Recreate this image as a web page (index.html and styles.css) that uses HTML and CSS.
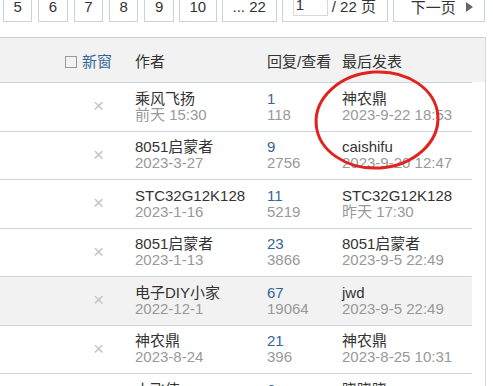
FILE: index.html
```html
<!DOCTYPE html>
<html>
	<head>
		<meta charset="utf-8">
		<title>帖子列表</title>
		<link rel="stylesheet" href="styles.css">
	</head>
	<body>
		<div class="pg">
			<a>5</a>
			<a>6</a>
			<a>7</a>
			<a>8</a>
			<a>9</a>
			<a class="ten">10</a>
			<a class="last">... 22</a>
			<label class="jump"><input type="text" value="1" size="2"> / 22 页</label>
			<a class="nxt">下一页<span class="arrow"></span></a>
		</div>

		<div class="list">
			<div class="head">
				<table cellpadding="0" cellspacing="0" border="0">
					<colgroup><col class="w1"><col class="w2"><col class="w3"><col class="w4"></colgroup>
					<tr>
						<td class="c1"><span class="chk"></span><span class="newwin">新窗</span></td>
						<td>作者</td>
						<td>回复/查看</td>
						<td>最后发表</td>
					</tr>
				</table>
			</div>

			<table class="rows" cellpadding="0" cellspacing="0" border="0">
				<colgroup><col class="w1"><col class="w2"><col class="w3"><col class="w4"></colgroup>
				<tr>
					<td class="c1"><span class="x">×</span></td>
					<td><div>乘风飞扬</div><div class="sub">前天 15:30</div></td>
					<td><div class="num">1</div><div class="sub">118</div></td>
					<td><div>神农鼎</div><div class="sub">2023-9-22 18:53</div></td>
				</tr>
				<tr>
					<td class="c1"><span class="x">×</span></td>
					<td><div>8051启蒙者</div><div class="sub">2023-3-27</div></td>
					<td><div class="num">9</div><div class="sub">2756</div></td>
					<td><div>caishifu</div><div class="sub">2023-9-20 12:47</div></td>
				</tr>
				<tr>
					<td class="c1"><span class="x">×</span></td>
					<td><div>STC32G12K128</div><div class="sub">2023-1-16</div></td>
					<td><div class="num">11</div><div class="sub">5219</div></td>
					<td><div>STC32G12K128</div><div class="sub">昨天 17:30</div></td>
				</tr>
				<tr>
					<td class="c1"><span class="x">×</span></td>
					<td><div>8051启蒙者</div><div class="sub">2023-1-13</div></td>
					<td><div class="num">23</div><div class="sub">3866</div></td>
					<td><div>8051启蒙者</div><div class="sub">2023-9-5 22:49</div></td>
				</tr>
				<tr class="hover">
					<td class="c1"><span class="x">×</span></td>
					<td><div>电子DIY小家</div><div class="sub">2022-12-1</div></td>
					<td><div class="num">67</div><div class="sub">19064</div></td>
					<td><div>jwd</div><div class="sub">2023-9-5 22:49</div></td>
				</tr>
				<tr>
					<td class="c1"><span class="x">×</span></td>
					<td><div>神农鼎</div><div class="sub">2023-8-24</div></td>
					<td><div class="num">21</div><div class="sub">396</div></td>
					<td><div>神农鼎</div><div class="sub">2023-8-25 10:31</div></td>
				</tr>
				<tr>
					<td class="c1"><span class="x">×</span></td>
					<td><div>小飞侠</div><div class="sub">2023-8-20</div></td>
					<td><div class="num">6</div><div class="sub">210</div></td>
					<td><div>晓晓晓</div><div class="sub">2023-8-22 09:12</div></td>
				</tr>
			</table>

			<svg class="mark" width="134" height="108" viewBox="0 0 134 108">
				<ellipse cx="66" cy="52" rx="61" ry="48" fill="none" stroke="#e0231d" stroke-width="3" transform="rotate(-4 66 52)"/>
			</svg>
		</div>
	</body>
</html>
```

FILE: styles.css
```css
body {
	margin: 0;
	background: #FFFFFF;
	color: #333333;
	font-family: "Liberation Sans", "Noto Sans CJK SC", sans-serif;
	font-size: 15px;
	overflow: hidden;
}
.pg {
	display: flex;
	gap: 6px;
	margin: -9px 0 0 3px;
	height: 31px;
}
.pg a, .pg .jump {
	display: flex;
	align-items: center;
	justify-content: center;
	height: 29px;
	padding: 0 9.5px;
	border: 1px solid #C9D2DA;
	background: #FFFFFF;
	color: #333333;
	white-space: nowrap;
}
.pg .ten {
	margin-left: -1px;
	width: 17px;
}
.pg .last {
	margin-left: -1px;
	width: 34px;
}
.pg .jump {
	align-items: flex-start;
	justify-content: flex-start;
	margin-left: -1px;
	padding: 0 5px 0 10px;
	width: 89px;
	line-height: 29px;
}
.pg .jump input {
	width: 29px;
	height: 20px;
	margin: 0 4px 0 0;
	padding: 1px 2px;
	border: 1px solid #D8D8D8;
	font: 15px "Liberation Sans", sans-serif;
	color: #333333;
}
.pg .nxt {
	margin-left: -1px;
	padding: 0 15px 0 17px;
	width: 58px;
	justify-content: flex-start;
}
.pg .arrow {
	display: block;
	width: 0;
	height: 0;
	margin-left: 10px;
	border-left: 7px solid #666666;
	border-top: 5px solid transparent;
	border-bottom: 5px solid transparent;
}
.list {
	position: relative;
	width: 485px;
	margin-top: 15px;
	border-right: 1px solid #D6D6D6;
	min-height: 400px;
}
.list table {
	width: 472px;
	table-layout: fixed;
	border-collapse: collapse;
}
.w1 {
	width: 131px;
}
.w2 {
	width: 132px;
}
.w3 {
	width: 75px;
}
.w4 {
	width: 134px;
}
.head {
	background: #F2F2F2;
	border-top: 1px solid #CFCFCF;
}
.head td {
	height: 44px;
	padding: 0 0 0 4px;
	vertical-align: middle;
	white-space: nowrap;
}
.head .c1 {
	padding-left: 65px;
}
.chk {
	display: inline-block;
	width: 10px;
	height: 10px;
	margin-right: 5px;
	border: 1px solid #999999;
	vertical-align: -1px;
}
.newwin {
	color: #336699;
}
.rows td {
	height: 47.5px;
	padding: 0 0 0 4px;
	border-top: 1px solid #CBD5DE;
	line-height: 16px;
	vertical-align: middle;
	white-space: nowrap;
	overflow: hidden;
}
.rows .c1 {
	padding-left: 93px;
}
.rows tr.hover td {
	background: #F2F2F2;
}
.x {
	color: #C4C4C4;
	font-size: 19px;
}
.sub {
	color: #999999;
}
.num {
	color: #336699;
}
.mark {
	position: absolute;
	left: 311px;
	top: 31px;
}
```
